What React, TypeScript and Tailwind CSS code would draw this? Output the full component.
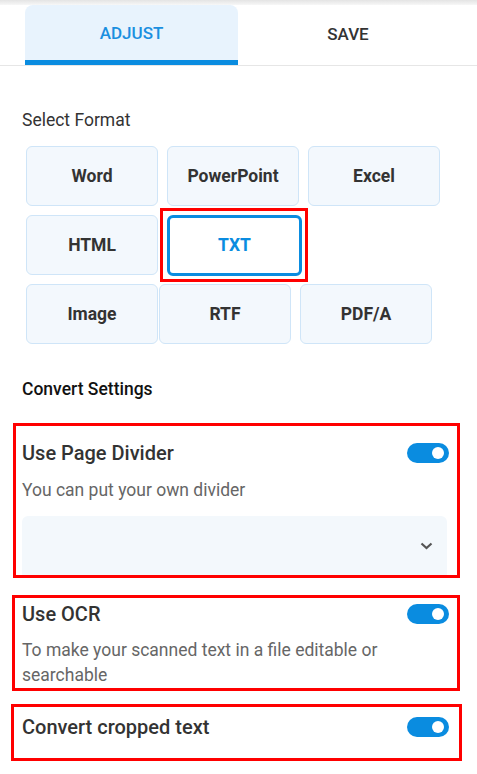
import React from "react";

const font = { fontFamily: "Roboto, 'Noto Sans', sans-serif" };

function FmtBtn({ label, className = "" }: { label: string; className?: string }) {
  return (
    <div
      className={`h-[60px] w-[132px] flex items-center justify-center rounded-[6px] border border-[#cfe5f8] bg-[#f3f8fd] text-[17.5px] font-bold text-[#333] ${className}`}
    >
      {label}
    </div>
  );
}

function Toggle() {
  return (
    <div className="relative h-[20px] w-[42px] rounded-full bg-[#0a8ce0] shrink-0">
      <div className="absolute right-[5px] top-[4px] h-[12px] w-[12px] rounded-full bg-white" />
    </div>
  );
}

export default function App() {
  return (
    <div className="w-[477px] h-[774px] bg-white overflow-hidden" style={font}>
      <div className="h-[5px] bg-gradient-to-b from-[#e4e4e4] to-[#f7f7f7]" />
      <div className="flex pl-[25px] border-b border-[#e6e6e6]">
        <div className="w-[213px] h-[60px] rounded-t-[8px] bg-[#e8f3fd] border-b-[5px] border-[#0a8ce0] flex items-center justify-center text-[17px] font-medium text-[#1a8fe0] pt-[3px]">
          ADJUST
        </div>
        <div className="w-[220px] h-[60px] flex items-center justify-center text-[17px] font-medium text-[#333]">
          SAVE
        </div>
      </div>

      <div className="pl-[22px] mt-[42px] h-[24px] leading-[24px] text-[17.5px] text-[#333]">
        Select Format
      </div>

      <div className="pl-[26px] mt-[14px] flex gap-[9px]">
        <FmtBtn label="Word" />
        <FmtBtn label="PowerPoint" />
        <FmtBtn label="Excel" />
      </div>
      <div className="pl-[26px] flex items-start">
        <FmtBtn label="HTML" className="mt-[9px]" />
        <div className="ml-[2px] mt-[2px] border-[3px] border-[#ff0000] pl-[4px] pr-[3px] pt-[4px] pb-[3px]">
          <div className="h-[61px] w-[135px] flex items-center justify-center rounded-[6px] border-[3px] border-[#0a8ce0] bg-white text-[17.5px] font-bold text-[#0a8ce0]">
            TXT
          </div>
        </div>
      </div>
      <div className="pl-[26px] mt-[2px] flex">
        <FmtBtn label="Image" />
        <FmtBtn label="RTF" className="ml-[1px]" />
        <FmtBtn label="PDF/A" className="ml-[9px]" />
      </div>

      <div className="pl-[22px] mt-[33px] h-[24px] leading-[24px] text-[17.5px] font-medium text-[#111]">
        Convert Settings
      </div>

      <div className="ml-[13px] w-[447px] mt-[22px] border-[3px] border-[#ff0000] pl-[6px] pt-[13px]">
        <div className="flex items-center justify-between h-[28px] pr-[8px]">
          <span className="text-[20px] font-medium text-[#333]">Use Page Divider</span>
          <Toggle />
        </div>
        <div className="mt-[11px] h-[24px] leading-[24px] text-[17.5px] text-[#666]">
          You can put your own divider
        </div>
        <div className="mt-[14px] mr-[10px] h-[59px] rounded-t-[6px] bg-[#f3f8fc] flex items-center justify-end pr-[14px]">
          <svg width="13" height="8" viewBox="0 0 13 8" fill="none">
            <path d="M1.5 1.5 L6.5 6 L11.5 1.5" stroke="#555" strokeWidth="2.2" />
          </svg>
        </div>
      </div>

      <div className="ml-[12px] w-[448px] mt-[17px] border-[3px] border-[#ff0000] pl-[7px] pr-[8px] pt-[2px] pb-[0px]">
        <div className="flex items-center justify-between h-[28px]">
          <span className="text-[20px] font-medium text-[#333]">Use OCR</span>
          <Toggle />
        </div>
        <div className="mt-[10px] leading-[25px] text-[17.5px] text-[#666] pr-[40px]">
          To make your scanned text in a file editable or searchable
        </div>
      </div>

      <div className="ml-[11px] w-[451px] mt-[13px] border-[3px] border-[#ff0000] pl-[8px] pr-[10px] pt-[6px] pb-[17px]">
        <div className="flex items-center justify-between h-[28px]">
          <span className="text-[20px] font-medium text-[#333]">Convert cropped text</span>
          <Toggle />
        </div>
      </div>
    </div>
  );
}
